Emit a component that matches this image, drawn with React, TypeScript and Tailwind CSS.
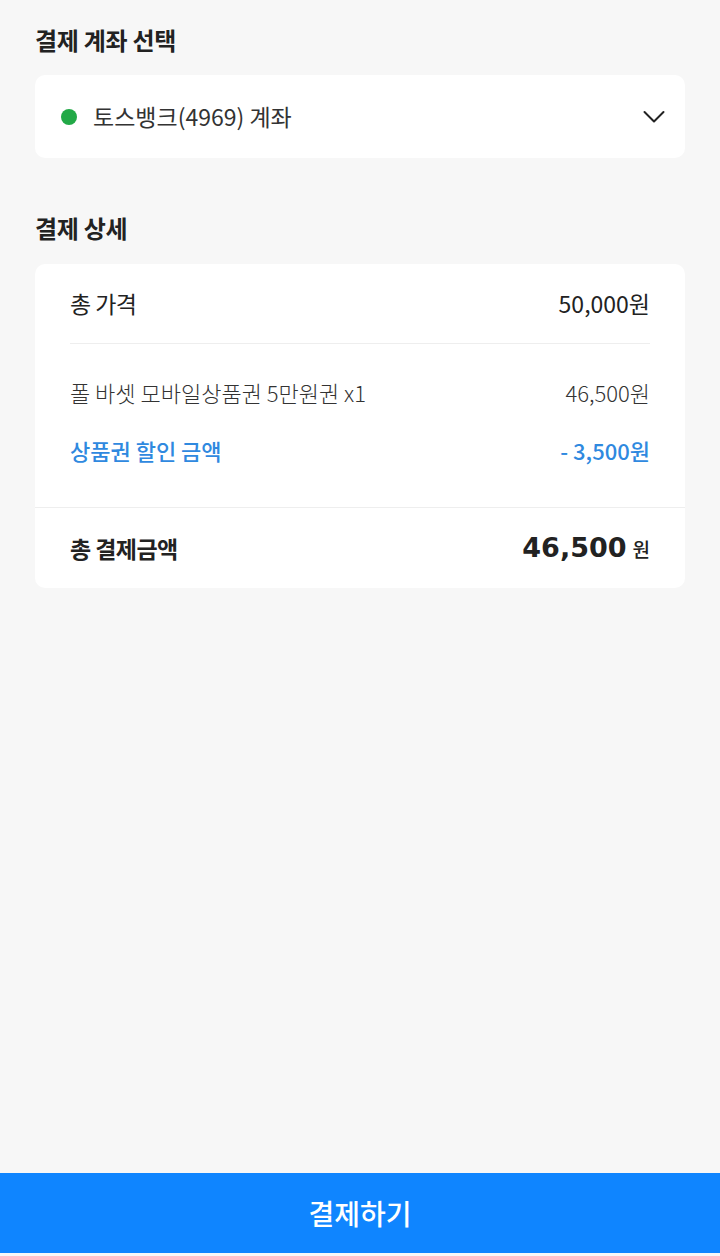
import React from "react";

const font = { fontFamily: '"Noto Sans CJK KR", "Noto Sans", sans-serif' };

function Row({ label, value, className }: { label: string; value: string; className: string }) {
  return (
    <div className={`flex h-10 items-center justify-between ${className}`}>
      <span>{label}</span>
      <span>{value}</span>
    </div>
  );
}

export default function App() {
  return (
    <div style={font} className="flex h-[1256px] w-[720px] flex-col bg-[#f7f7f7] text-[#222]">
      <div className="flex-1 px-[35px] pt-[25px]">
        <h2 className="mb-5 h-[30px] text-[24px] font-bold leading-[30px] tracking-[-0.3px]">결제 계좌 선택</h2>

        <div className="flex h-[83px] items-center rounded-[10px] bg-white pl-[26px] pr-5">
          <span className="h-4 w-4 rounded-full bg-[#22a947]" />
          <span className="ml-4 flex-1 text-[23px] text-[#333]">토스뱅크(4969) 계좌</span>
          <svg width="22" height="14" viewBox="0 0 22 14" fill="none" stroke="#222" strokeWidth="2" strokeLinecap="round" strokeLinejoin="round">
            <path d="M1.5 2l9.5 9.5L20.5 2" />
          </svg>
        </div>

        <h2 className="mb-[21px] mt-[55px] h-[30px] text-[24px] font-bold leading-[30px] tracking-[-0.3px]">결제 상세</h2>

        <div className="rounded-[10px] bg-white">
          <div className="px-[35px]">
            <div className="flex h-20 items-center justify-between border-b border-[#eeeeee] text-[23px]">
              <span className="tracking-tight">총 가격</span>
              <span>50,000원</span>
            </div>
            <div className="pb-[37px] pt-[28px]">
              <Row label="폴 바셋 모바일상품권 5만원권 x1" value="46,500원" className="text-[22px] font-light text-[#333]" />
              <Row label="상품권 할인 금액" value="- 3,500원" className="mt-[18px] text-[22px] font-medium text-[#2f89df]" />
            </div>
          </div>
          <div className="flex h-[81px] items-center justify-between border-t border-[#eeeeee] px-[35px]">
            <span className="text-[23px] font-bold tracking-tight">총 결제금액</span>
            <span className="flex items-baseline">
              <span className="text-[27px] font-bold" style={{ fontFamily: '"DejaVu Sans", sans-serif' }}>46,500</span>
              <span className="ml-1.5 text-[19px] font-medium">원</span>
            </span>
          </div>
        </div>
      </div>

      <button className="mb-[3px] h-20 w-full bg-[#0f85ff] text-[28px] font-medium text-white">결제하기</button>
    </div>
  );
}
